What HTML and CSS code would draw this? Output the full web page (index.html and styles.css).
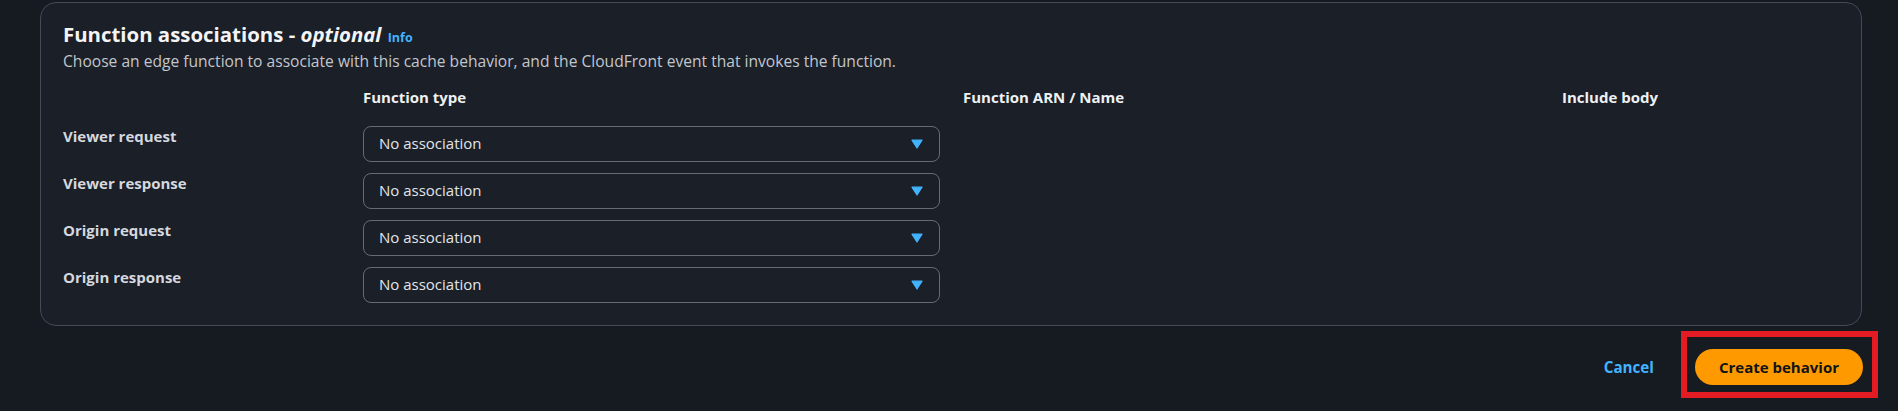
FILE: index.html
```html
<!DOCTYPE html>
<html lang="en">
<head>
<meta charset="utf-8">
<title>Function associations</title>
<link rel="stylesheet" href="styles.css">
</head>
<body>
<div class="page">
  <section class="container">
    <h2 class="title">Function associations - <em>optional</em> <a class="info" href="#">Info</a></h2>
    <p class="desc">Choose an edge function to associate with this cache behavior, and the CloudFront event that invokes the function.</p>
    <div class="grid">
      <div class="head"></div>
      <div class="head">Function type</div>
      <div class="head">Function ARN / Name</div>
      <div class="head">Include body</div>

      <div class="label">Viewer request</div>
      <div class="select"><span>No association</span><svg class="caret" width="12" height="10" viewBox="0 0 12 10"><path d="M1 1.2 H11 L6 9 Z" fill="#42b4ff" stroke="#42b4ff" stroke-width="1.2" stroke-linejoin="round"/></svg></div>
      <div></div><div></div>

      <div class="label">Viewer response</div>
      <div class="select"><span>No association</span><svg class="caret" width="12" height="10" viewBox="0 0 12 10"><path d="M1 1.2 H11 L6 9 Z" fill="#42b4ff" stroke="#42b4ff" stroke-width="1.2" stroke-linejoin="round"/></svg></div>
      <div></div><div></div>

      <div class="label">Origin request</div>
      <div class="select"><span>No association</span><svg class="caret" width="12" height="10" viewBox="0 0 12 10"><path d="M1 1.2 H11 L6 9 Z" fill="#42b4ff" stroke="#42b4ff" stroke-width="1.2" stroke-linejoin="round"/></svg></div>
      <div></div><div></div>

      <div class="label">Origin response</div>
      <div class="select"><span>No association</span><svg class="caret" width="12" height="10" viewBox="0 0 12 10"><path d="M1 1.2 H11 L6 9 Z" fill="#42b4ff" stroke="#42b4ff" stroke-width="1.2" stroke-linejoin="round"/></svg></div>
      <div></div><div></div>
    </div>
  </section>
  <div class="footer">
    <a class="cancel" href="#">Cancel</a>
    <span class="primary-wrap">
      <button class="primary" type="button">Create behavior</button>
      <span class="annot"></span>
    </span>
  </div>
</div>
</body>
</html>
```

FILE: styles.css
```css
html, body {
  margin: 0;
  padding: 0;
  background: #161a21;
}
body {
  font-family: "Open Sans", "Noto Sans", Arial, sans-serif;
  color: #d1d5db;
  width: 1898px;
  height: 411px;
  overflow: hidden;
}
.page {
  padding: 2px 36px 0 40px;
}
.container {
  background: #1a1f28;
  border: 1px solid #434b57;
  border-radius: 16px;
  padding: 19px 20px 22px 22px;
}
.title {
  margin: 0;
  font-size: 20.4px;
  line-height: 24px;
  font-weight: 700;
  color: #f4f4f6;
}
.title em {
  font-style: italic;
}
.info {
  font-size: 12.5px;
  font-weight: 700;
  color: #42b4ff;
  text-decoration: none;
  margin-left: 1px;
}
.desc {
  margin: 1px 0 0;
  font-size: 15.6px;
  line-height: 20px;
  color: #c3c6cc;
}
.grid {
  margin-top: 16px;
  display: grid;
  grid-template-columns: 277px 577px 576px 1fr;
  column-gap: 23px;
  row-gap: 11px;
}
.head {
  font-size: 15px;
  line-height: 20px;
  font-weight: 700;
  color: #eef0f3;
  padding-bottom: 8px;
}
.label {
  font-size: 15px;
  line-height: 20px;
  font-weight: 700;
  color: #d5d8de;
}
.select {
  height: 36px;
  box-sizing: border-box;
  border: 1px solid #656b76;
  border-radius: 8px;
  display: flex;
  align-items: center;
  justify-content: space-between;
  padding: 0 16px 2px 15px;
  font-size: 15px;
  line-height: 20px;
  color: #e3e5e9;
}
.caret {
  display: block;
  margin-top: 2px;
}
.footer {
  display: flex;
  justify-content: flex-end;
  align-items: center;
  gap: 41px;
  margin-top: 23px;
}
.cancel {
  font-size: 15.2px;
  font-weight: 700;
  color: #42b4ff;
  text-decoration: none;
}
.primary-wrap {
  position: relative;
  display: inline-flex;
  margin-right: -1px;
}
.primary {
  font-family: inherit;
  font-size: 15px;
  font-weight: 700;
  line-height: 36px;
  height: 36px;
  padding: 0 24px;
  border: 0;
  border-radius: 20px;
  background: #ff9900;
  color: #0f141a;
}
.annot {
  position: absolute;
  top: -18px;
  bottom: -13px;
  left: -14px;
  right: -15px;
  border: 6px solid #e31b23;
  pointer-events: none;
}
```
